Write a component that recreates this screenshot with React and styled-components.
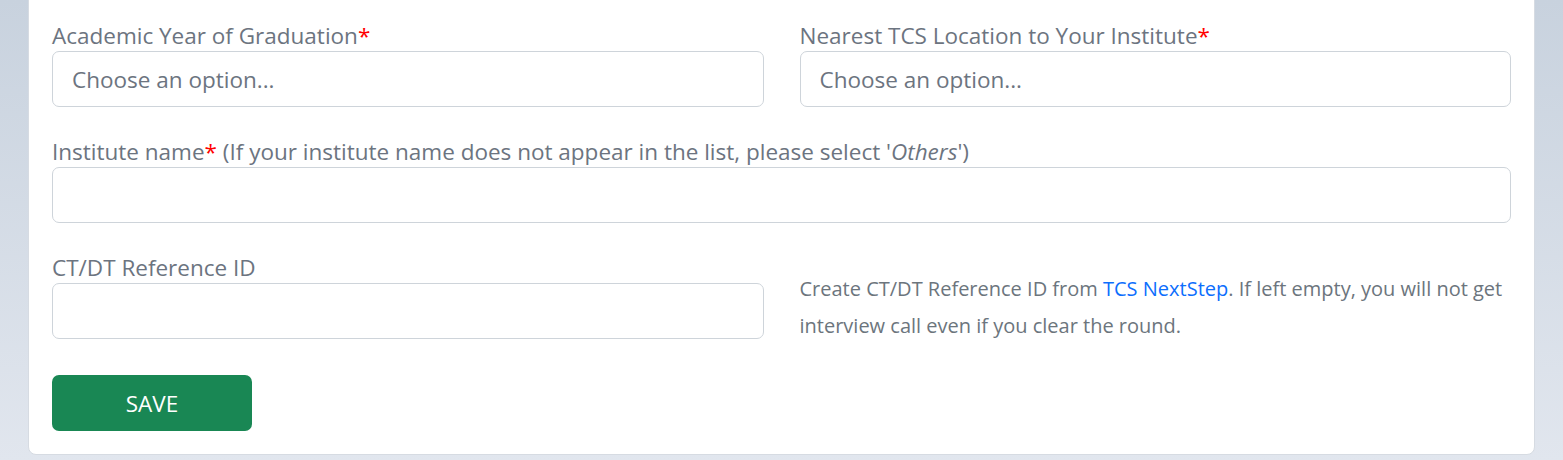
import React from "react";
import styled, { createGlobalStyle } from "styled-components";

const GlobalStyle = createGlobalStyle`
  html, body {
    margin: 0;
    height: 100%;
  }
  body {
    background: linear-gradient(to bottom, #c8d2de, #e1e6ee);
    font-family: "Open Sans", "Noto Sans", sans-serif;
    overflow: hidden;
  }
`;

const Page = styled.div`
  padding: 0 28px 5px;
`;

const Card = styled.form`
  margin-top: -17px;
  padding: 37px 23px 23px;
  background: #fff;
  border: 1px solid #d6dbe2;
  border-radius: 8px;
`;

const Grid = styled.div`
  display: grid;
  grid-template-columns: 1fr 1fr;
  column-gap: 36px;
  row-gap: 30px;
`;

const Field = styled.div`
  display: flex;
  flex-direction: column;
  grid-column: ${(p) => (p.$wide ? "1 / -1" : "auto")};
`;

const Label = styled.label`
  font-size: 22.5px;
  line-height: 30px;
  color: #6c7480;
  em {
    font-style: italic;
  }
`;

const Req = styled.span`
  color: #f00;
`;

const Select = styled.div`
  box-sizing: border-box;
  height: 56px;
  border: 1px solid #ced4da;
  border-radius: 7px;
  padding: 0 19px;
  display: flex;
  align-items: center;
  font-size: 22.5px;
  color: #6c7480;
`;

const Input = styled.input`
  box-sizing: border-box;
  height: 56px;
  width: 100%;
  border: 1px solid #ced4da;
  border-radius: 7px;
  padding: 0 19px;
  font: inherit;
  font-size: 22.5px;
  outline: none;
`;

const Help = styled.p`
  align-self: end;
  margin: 0 0 -5px;
  font-size: 20px;
  line-height: 37px;
  color: #6c757d;
  a {
    color: #0d6efd;
    text-decoration: none;
  }
`;

const SaveButton = styled.button`
  margin-top: 36px;
  width: 200px;
  height: 56px;
  border: none;
  border-radius: 7px;
  background: #198754;
  color: #fff;
  font-family: inherit;
  font-size: 22.5px;
  cursor: pointer;
`;

export default function App() {
  return (
    <Page>
      <GlobalStyle />
      <Card onSubmit={(e) => e.preventDefault()}>
        <Grid>
          <Field>
            <Label>
              Academic Year of Graduation<Req>*</Req>
            </Label>
            <Select>Choose an option...</Select>
          </Field>
          <Field>
            <Label>
              Nearest TCS Location to Your Institute<Req>*</Req>
            </Label>
            <Select>Choose an option...</Select>
          </Field>
          <Field $wide>
            <Label>
              Institute name<Req>*</Req> (If your institute name does not appear in the list, please select '<em>Others</em>')
            </Label>
            <Input type="text" />
          </Field>
          <Field>
            <Label>CT/DT Reference ID</Label>
            <Input type="text" />
          </Field>
          <Help>
            Create CT/DT Reference ID from <a href="#">TCS NextStep</a>. If left empty, you will not get interview call even if you clear the round.
          </Help>
        </Grid>
        <SaveButton type="submit">SAVE</SaveButton>
      </Card>
    </Page>
  );
}
